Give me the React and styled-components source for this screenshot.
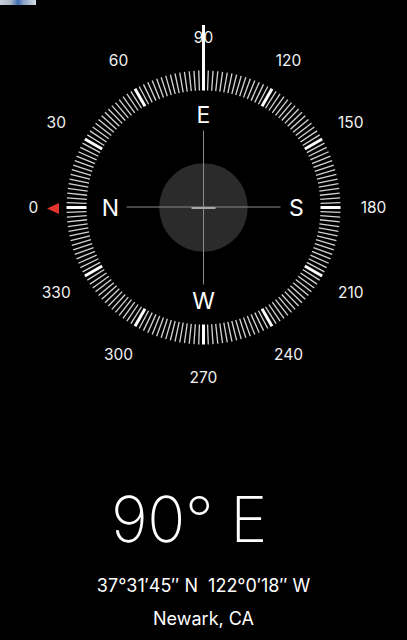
import styled, { createGlobalStyle } from "styled-components";

const GlobalStyle = createGlobalStyle`
  html, body {
    margin: 0;
    padding: 0;
    background: #000;
  }
  body {
    font-family: Inter, "Noto Sans", "Liberation Sans", sans-serif;
    color: #fff;
  }
`;

// geometry of the dial, in svg units (1 unit = 1px)
const CX = 203.5;
const CY = 207.5;
const TICK_OUT = 137;
const TICK_IN = 117;
const NUM_R = 170;
const LETTER_R = 93;

const Page = styled.div`
  position: relative;
  width: 407px;
  height: 640px;
  overflow: hidden;
  background: #000;
  display: flex;
  flex-direction: column;
  align-items: center;
`;

// leftover blurry bit of the status bar in the top-left corner
const StatusSmudge = styled.div`
  position: absolute;
  top: 0;
  left: 0;
  width: 36px;
  height: 5px;
  background: linear-gradient(90deg, #c9cfd8 0%, #aab6c9 30%, #3d6cb3 50%, #8aa2c8 65%, #d5dae2 100%);
  filter: blur(0.4px);
`;

const Dial = styled.svg`
  display: block;
  width: 407px;
  height: 400px;
  flex-shrink: 0;
`;

const DegreeLabel = styled.text`
  font-family: Inter, "Noto Sans", sans-serif;
  font-size: 15.5px;
  fill: #f2f2f2;
`;

const Cardinal = styled.text`
  font-family: Inter, "Noto Sans", sans-serif;
  font-size: 23px;
  fill: #fff;
`;

const Readout = styled.div`
  display: flex;
  flex-direction: column;
  align-items: center;
  padding-top: 88px;
  width: 100%;
`;

const Heading = styled.div`
  font-size: 63px;
  font-weight: 200;
  line-height: 1;
  letter-spacing: -0.5px;
  margin-right: 29px;
`;

const Coords = styled.div`
  margin-top: 26px;
  font-size: 18px;
  line-height: 1;
  white-space: pre;
`;

const Place = styled.div`
  margin-top: 15px;
  font-size: 18px;
  line-height: 1;
`;

const pt = (deg, r) => {
  const a = ((180 + deg) * Math.PI) / 180;
  return [CX + r * Math.cos(a), CY + r * Math.sin(a)];
};

const ticks = Array.from({ length: 180 }, (_, i) => i * 2);
const numbers = Array.from({ length: 12 }, (_, i) => i * 30);
const cardinals = [
  { d: 0, t: "N" },
  { d: 90, t: "E" },
  { d: 180, t: "S" },
  { d: 270, t: "W" },
];

function Compass() {
  return (
    <Dial viewBox="0 0 407 400">
      {ticks.map((d) => {
        const major = d % 30 === 0;
        const [x1, y1] = pt(d, TICK_IN);
        const [x2, y2] = pt(d, TICK_OUT);
        return (
          <line
            key={d}
            x1={x1}
            y1={y1}
            x2={x2}
            y2={y2}
            stroke={major ? "#fff" : "#d4d4d4"}
            strokeWidth={major ? 3 : 1.3}
          />
        );
      })}
      {numbers.map((d) => {
        const [x, y] = pt(d, NUM_R);
        return (
          <DegreeLabel key={d} x={x} y={y} textAnchor="middle" dominantBaseline="central">
            {d}
          </DegreeLabel>
        );
      })}
      {cardinals.map(({ d, t }) => {
        const [x, y] = pt(d, LETTER_R);
        return (
          <Cardinal key={t} x={x} y={y} textAnchor="middle" dominantBaseline="central">
            {t}
          </Cardinal>
        );
      })}
      <circle cx={CX} cy={CY} r={44.3} fill="#2b2b2b" />
      <line x1={CX - 77} y1={CY - 0.5} x2={CX + 77} y2={CY - 0.5} stroke="#8a8a8a" strokeWidth={1} />
      <line x1={CX} y1={CY - 77} x2={CX} y2={CY + 77} stroke="#8a8a8a" strokeWidth={1} />
      <line x1={CX - 12} y1={CY + 0.5} x2={CX + 12} y2={CY + 0.5} stroke="#a8a8a8" strokeWidth={2} />
      {/* heading pointer */}
      <line x1={CX} y1={25} x2={CX} y2={CY - TICK_OUT + 1} stroke="#fff" strokeWidth={3} />
      {/* north marker */}
      <polygon points="47,208.5 59,203 59,214" fill="#e3352b" />
    </Dial>
  );
}

export default function App() {
  return (
    <>
      <GlobalStyle />
      <Page>
        <StatusSmudge />
        <Compass />
        <Readout>
          <Heading>90° E</Heading>
          <Coords>{"37°31′45″ N  122°0′18″ W"}</Coords>
          <Place>Newark, CA</Place>
        </Readout>
      </Page>
    </>
  );
}
